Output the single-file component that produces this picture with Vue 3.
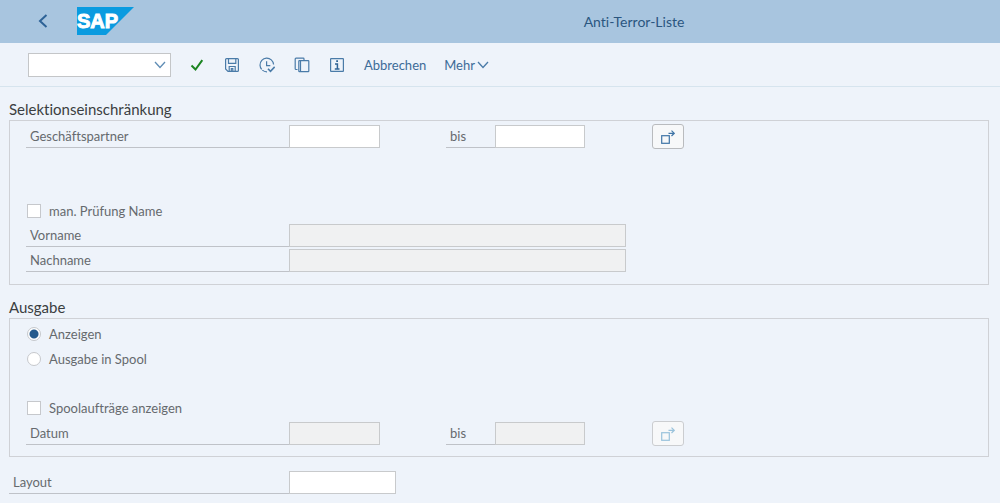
<script setup>
import { ref } from 'vue'

const command = ref('')
const partnerFrom = ref('')
const partnerTo = ref('')
const manualCheck = ref(false)
const firstName = ref('')
const lastName = ref('')
const output = ref('display')
const showSpool = ref(false)
const dateFrom = ref('')
const dateTo = ref('')
const layout = ref('')
</script>

<template>
  <div class="page">
    <header class="shell">
      <div class="shell-left">
        <button class="icon-btn back" type="button" aria-label="Zurück">
          <svg width="12" height="16" viewBox="0 0 12 16"><path d="M9.500 2L3 8l6.500 6" fill="none" stroke="#2d6296" stroke-width="2" /></svg>
        </button>
        <svg class="logo" width="57" height="28" viewBox="0 0 57 28" role="img" aria-label="SAP">
          <path d="M0 0H57L29 28H0Z" fill="#0a9be0" />
          <text class="logo-text" x="0" y="21">SAP</text>
        </svg>
      </div>
      <h1>Anti-Terror-Liste</h1>
    </header>

    <div class="toolbar">
      <div class="command">
        <input v-model="command" type="text" aria-label="Kommando" />
        <button type="button" aria-label="Liste öffnen">
          <svg width="12" height="8" viewBox="0 0 12 8"><path d="M1 1l5 5.500L11 1" fill="none" stroke="#5f8db5" stroke-width="1.300" /></svg>
        </button>
      </div>
      <div class="icons">
        <button class="icon-btn" type="button" aria-label="Ausführen">
          <svg width="16" height="16" viewBox="0 0 16 16"><path d="M2.500 8.500l4 4L13.300 3.200" fill="none" stroke="#1b8420" stroke-width="2" /></svg>
        </button>
        <button class="icon-btn" type="button" aria-label="Sichern">
          <svg width="16" height="16" viewBox="0 0 16 16" fill="none" stroke="#4a7ba8" stroke-width="1.200">
            <path d="M2.500 1.600h11a.9.900 0 0 1 .9.900v11a.9.900 0 0 1-.9.900H4L1.600 12V2.500a.9.900 0 0 1 .9-.9z" />
            <path d="M4.500 1.600v4.800h7.300V1.600M5.200 14.400V9.500h6v4.900M7.300 14v-2.400h1.500V14" />
          </svg>
        </button>
        <button class="icon-btn" type="button" aria-label="Im Hintergrund ausführen">
          <svg width="16" height="16" viewBox="0 0 16 16" fill="none" stroke="#4a7ba8" stroke-width="1.200">
            <path d="M8 14.800A6.800 6.800 0 1 1 14.600 7.500" stroke-dasharray="5 1 40" />
            <path d="M7.600 4.200v4.500h3.700" />
            <path d="M9 11.700l2.500 2.700 4.200-4.500" stroke-width="1.600" />
          </svg>
        </button>
        <button class="icon-btn" type="button" aria-label="Variante holen">
          <svg width="16" height="16" viewBox="0 0 16 16" fill="none" stroke="#4a7ba8" stroke-width="1.200">
            <path d="M3.500 12.500H2a.8.800 0 0 1-.8-.8V2a.8.800 0 0 1 .8-.8h7.200a.8.800 0 0 1 .8.800v1.500" />
            <rect x="4.800" y="3.600" width="10" height="11" rx=".6" />
            <path d="M6.500 3.600v11" />
          </svg>
        </button>
        <button class="icon-btn" type="button" aria-label="Information">
          <svg width="16" height="16" viewBox="0 0 16 16" fill="none" stroke="#4a7ba8" stroke-width="1.200">
            <rect x="1.600" y="1.600" width="12.800" height="12.800" rx=".5" />
            <path d="M6 6.900h2.400v5M5.800 12h4.700" stroke="#2f6496" stroke-width="1.500" />
            <path d="M7.200 4.200h1.800" stroke="#2f6496" stroke-width="1.800" />
          </svg>
        </button>
      </div>
      <button class="text-btn" type="button">Abbrechen</button>
      <button class="text-btn" type="button">
        Mehr
        <svg width="12" height="8" viewBox="0 0 12 8"><path d="M1 1l5 5.500L11 1" fill="none" stroke="#4a7ba8" stroke-width="1.300" /></svg>
      </button>
    </div>

    <main>
      <section>
        <h2>Selektionseinschränkung</h2>
        <div class="box">
          <div class="row">
            <label class="lbl" for="partner-from">Geschäftspartner</label>
            <input id="partner-from" v-model="partnerFrom" class="field" type="text" />
            <label class="lbl to" for="partner-to">bis</label>
            <input id="partner-to" v-model="partnerTo" class="field" type="text" />
            <button class="multi" type="button" aria-label="Mehrfachselektion Geschäftspartner">
              <svg width="14" height="14" viewBox="0 0 14 14" fill="none" stroke="#3f74a6" stroke-width="1.200">
                <rect x=".7" y="5.700" width="7.600" height="7.600" />
                <path d="M7.500 3.300h5.800M10.500.6l2.800 2.700L10.500 6" />
              </svg>
            </button>
          </div>
          <label class="choice after-gap">
            <input v-model="manualCheck" type="checkbox" />man. Prüfung Name
          </label>
          <div class="row">
            <label class="lbl" for="first-name">Vorname</label>
            <input id="first-name" v-model="firstName" class="field wide" type="text" :disabled="!manualCheck" />
          </div>
          <div class="row next">
            <label class="lbl" for="last-name">Nachname</label>
            <input id="last-name" v-model="lastName" class="field wide" type="text" :disabled="!manualCheck" />
          </div>
        </div>
      </section>

      <section>
        <h2>Ausgabe</h2>
        <div class="box">
          <label class="choice">
            <input v-model="output" type="radio" name="output" value="display" />Anzeigen
          </label>
          <label class="choice">
            <input v-model="output" type="radio" name="output" value="spool" />Ausgabe in Spool
          </label>
          <label class="choice after-line">
            <input v-model="showSpool" type="checkbox" />Spoolaufträge anzeigen
          </label>
          <div class="row">
            <label class="lbl" for="date-from">Datum</label>
            <input id="date-from" v-model="dateFrom" class="field" type="text" :disabled="!showSpool" />
            <label class="lbl to" for="date-to">bis</label>
            <input id="date-to" v-model="dateTo" class="field" type="text" :disabled="!showSpool" />
            <button class="multi" type="button" aria-label="Mehrfachselektion Datum" :disabled="!showSpool">
              <svg width="14" height="14" viewBox="0 0 14 14" fill="none" stroke="#3f8fc0" stroke-width="1.200">
                <rect x=".7" y="5.700" width="7.600" height="7.600" />
                <path d="M7.500 3.300h5.800M10.500.6l2.800 2.700L10.500 6" />
              </svg>
            </button>
          </div>
        </div>
      </section>

      <div class="row layout-row">
        <label class="lbl" for="layout">Layout</label>
        <input id="layout" v-model="layout" class="field" type="text" />
      </div>
    </main>
  </div>
</template>

<style>
body {
  margin: 0;
  background: #eef3fa;
}
</style>

<style scoped>
.page {
  min-height: 100vh;
  box-sizing: border-box;
  background: #eef3fa;
  color: #666a6e;
  font: 13px/16px Lato, "Liberation Sans", sans-serif;
  font-variant-ligatures: none;
}
button,
input {
  box-sizing: border-box;
  font: inherit;
  color: inherit;
}
button {
  padding: 0;
  border: 0;
  background: none;
  cursor: pointer;
}
svg {
  display: block;
}
.shell {
  display: grid;
  grid-template-columns: 268px 1fr;
  align-items: center;
  height: 43px;
  background: #a8c5df;
}
.shell-left {
  display: flex;
  align-items: center;
  gap: 17px;
  padding: 0 0 2px 26px;
}
.icon-btn {
  display: flex;
  align-items: center;
  justify-content: center;
  width: 35px;
  height: 26px;
}
.back {
  width: 34px;
}
.logo-text {
  font: bold 20px "Liberation Sans", Arial, sans-serif;
  fill: #fff;
  stroke: #fff;
  stroke-width: 1px;
}
h1 {
  margin: 0;
  color: #2b567f;
  font-size: 14px;
  font-weight: 400;
  line-height: 20px;
  text-align: center;
}
.toolbar {
  display: flex;
  align-items: center;
  box-sizing: border-box;
  height: 44px;
  padding: 1px 28px 0;
  border-bottom: 1px solid #d6e4ee;
}
.command {
  display: flex;
  box-sizing: border-box;
  width: 143px;
  height: 24px;
  border: 1px solid #c4c6c8;
  background: #fff;
}
.command input {
  flex: 1;
  min-width: 0;
  border: 0;
  padding: 0 6px;
  background: none;
}
.command button {
  display: flex;
  align-items: center;
  justify-content: center;
  width: 20px;
}
.icons {
  display: flex;
  margin: 0 10px 0 8px;
}
.text-btn {
  display: flex;
  align-items: center;
  gap: 2px;
  margin-right: 18px;
  color: #3c6b98;
}
main {
  padding: 13px 11px 9px 9px;
}
h2 {
  margin: 0;
  padding-bottom: 2px;
  color: #3b3e41;
  font-size: 15px;
  font-weight: 400;
  line-height: 18px;
}
.box {
  margin-bottom: 13px;
  padding: 3px 16px 12px;
  border: 1px solid #cfd1d6;
}
.row {
  display: grid;
  grid-template-columns: 263px 91px 115px 90px 67px 32px;
  align-items: center;
  height: 23px;
}
.next {
  margin-top: 2px;
}
.lbl {
  box-sizing: border-box;
  height: 23px;
  padding: 3px 4px 0;
  border-bottom: 1px solid #bfc2c8;
}
.to {
  margin-left: 66px;
}
.field {
  width: 100%;
  height: 23px;
  padding: 0 6px;
  border: 1px solid #c8cacc;
  border-radius: 0;
  background: #fff;
}
.field:disabled {
  background: #f0f1f2;
}
.wide {
  grid-column: 2 / 5;
  width: 337px;
  max-width: none;
}
.multi {
  display: flex;
  align-items: center;
  justify-content: center;
  grid-column: 6;
  width: 32px;
  height: 25px;
  border: 1px solid #b9bbbe;
  border-radius: 3px;
  background: #f7f8f9;
}
.multi:disabled {
  border-color: #cbcdd0;
}
.multi:disabled svg {
  opacity: 0.5;
}
.choice {
  display: flex;
  align-items: center;
  box-sizing: border-box;
  gap: 8px;
  width: max-content;
  height: 25px;
  padding: 0 0 2px 1px;
}
.choice input {
  appearance: none;
  width: 14px;
  height: 14px;
  margin: 0;
  border: 1px solid #c6c8cc;
  background: #fff;
}
.choice input[type="radio"] {
  border-radius: 50%;
}
.choice input[type="radio"]:checked {
  background: radial-gradient(circle, #265a8c 4px, #fff 5px);
}
.choice input[type="checkbox"]:checked {
  background: #265a8c;
}
.after-gap {
  margin-top: 52px;
}
.after-line {
  margin-top: 24px;
}
.layout-row {
  grid-template-columns: 280px 107px;
  margin-top: 14px;
}
</style>
